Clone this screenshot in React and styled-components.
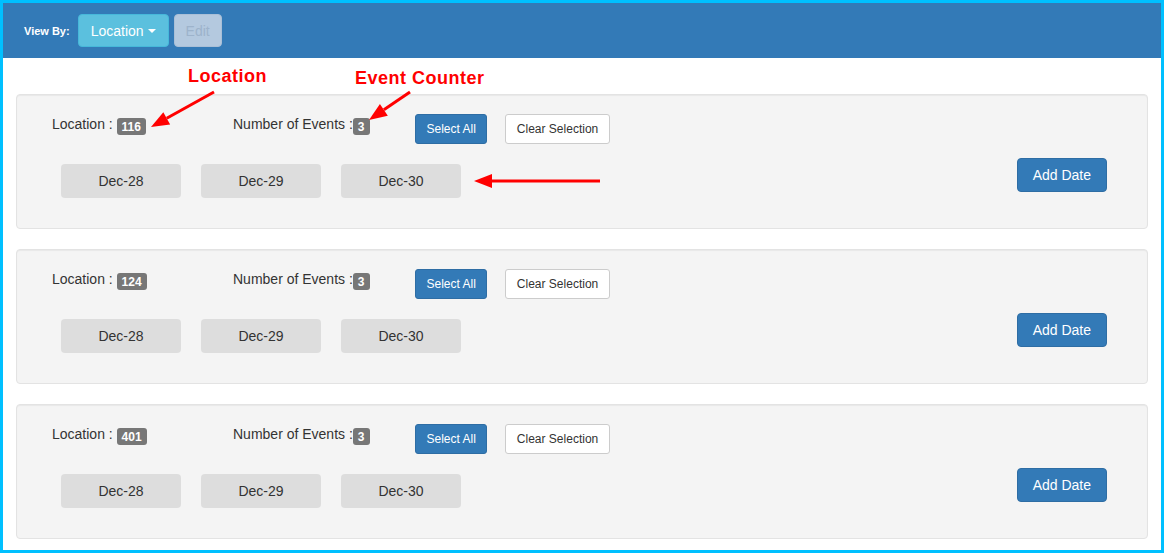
import React from 'react'
import styled, { createGlobalStyle } from 'styled-components';

const GlobalStyle = createGlobalStyle`
    * { box-sizing: border-box; }
    body {
        margin: 0;
        font-family: "Liberation Sans", Arial, sans-serif;
        font-size: 14px;
        color: #333;
        background: #fff;
    }
`;

const Frame = styled.div`
    position: relative;
    width: 1164px;
    height: 553px;
    border: 3px solid #00c0ff;
    overflow: hidden;
`;

const Navbar = styled.div`
    height: 55px;
    background-color: #337ab7;
    display: flex;
    align-items: center;
    padding: 0 21px;
`;

const ViewLabel = styled.span`
    color: #fff;
    font-size: 11px;
    font-weight: bold;
    margin-right: 8px;
`;

const NavButton = styled.button`
    height: 33px;
    padding: 0 ${p => p.$disabled ? 11 : 12}px;
    margin-right: 5px;
    font-family: inherit;
    font-size: 14px;
    border-radius: 4px;
    border: 1px solid ${p => p.$disabled ? '#a9bfd7' : '#46b8da'};
    background-color: ${p => p.$disabled ? '#b4c9df' : '#5bc0de'};
    color: ${p => p.$disabled ? '#9db3cb' : '#fff'};
    display: flex;
    align-items: center;
    gap: 4px;
`;

const Caret = styled.span`
    display: inline-block;
    width: 0;
    height: 0;
    border-top: 4px solid #fff;
    border-left: 4px solid transparent;
    border-right: 4px solid transparent;
    margin-top: 1px;
`;

const Content = styled.div`
    padding: 36px 13px 0 13px;
    display: flex;
    flex-direction: column;
    gap: 20.5px;
`;

const Well = styled.div`
    height: 134.5px;
    background-color: #f4f4f4;
    border: 1px solid #e3e3e3;
    border-radius: 4px;
    box-shadow: inset 0 1px 1px rgba(0,0,0,0.05);
    padding: 19px 39px 0 35px;
`;

const TopRow = styled.div`
    display: flex;
    align-items: flex-start;
    height: 30px;
`;

const InfoGroup = styled.div`
    width: ${p => p.$width}px;
    line-height: 20px;
    white-space: nowrap;
`;

const Badge = styled.span`
    display: inline-block;
    background-color: #777;
    color: #fff;
    font-size: 12px;
    font-weight: bold;
    line-height: 12px;
    padding: 3px 5px 2px;
    border-radius: 3px;
    vertical-align: -2px;
`;

const SmallButton = styled.button`
    height: 30px;
    padding: 0 10.5px;
    font-family: inherit;
    font-size: 12px;
    border-radius: 3px;
    margin-right: 18px;
    border: 1px solid ${p => p.$primary ? '#2e6da4' : '#ccc'};
    background-color: ${p => p.$primary ? '#337ab7' : '#fff'};
    color: ${p => p.$primary ? '#fff' : '#333'};
`;

const BottomRow = styled.div`
    display: flex;
    align-items: flex-start;
    justify-content: space-between;
    margin-top: 14px;
    padding-left: 9px;
`;

const Dates = styled.div`
    display: flex;
    gap: 20px;
    margin-top: 6px;
`;

const DateChip = styled.div`
    width: 120px;
    height: 34px;
    background-color: #ddd;
    border-radius: 4px;
    display: flex;
    align-items: center;
    justify-content: center;
    font-size: 14px;
    color: #333;
`;

const AddButton = styled.button`
    height: 34px;
    padding: 0 15px;
    margin-right: 1px;
    font-family: inherit;
    font-size: 14px;
    border-radius: 4px;
    border: 1px solid #2e6da4;
    background-color: #337ab7;
    color: #fff;
`;

const Note = styled.span`
    position: absolute;
    left: ${p => p.$x}px;
    top: ${p => p.$y}px;
    color: #f00;
    font-size: 18px;
    font-weight: bold;
    letter-spacing: 0.5px;
    line-height: 20px;
`;

const Arrows = styled.svg`
    position: absolute;
    left: -3px;
    top: -3px;
    pointer-events: none;
`;

function Arrow({ x1, y1, x2, y2 }) {
    const angle = Math.atan2(y2 - y1, x2 - x1);
    const len = 18;
    const half = 7;
    const bx = x2 - len * Math.cos(angle);
    const by = y2 - len * Math.sin(angle);
    const px = -Math.sin(angle) * half;
    const py = Math.cos(angle) * half;
    const points = `${x2},${y2} ${bx + px},${by + py} ${bx - px},${by - py}`;
    return (
        <g>
            <line x1={x1} y1={y1} x2={bx} y2={by} stroke="#f00" strokeWidth="3" />
            <polygon points={points} fill="#f00" />
        </g>
    );
}

const locations = ['116', '124', '401'];
const dates = ['Dec-28', 'Dec-29', 'Dec-30'];

export default function App() {
    return (
        <Frame>
            <GlobalStyle />
            <Navbar>
                <ViewLabel>View By:</ViewLabel>
                <NavButton>Location <Caret /></NavButton>
                <NavButton $disabled>Edit</NavButton>
            </Navbar>
            <Content>
                {locations.map(loc => (
                    <Well key={loc}>
                        <TopRow>
                            <InfoGroup $width={181}>Location : <Badge>{loc}</Badge></InfoGroup>
                            <InfoGroup $width={182}>Number of Events :<Badge>3</Badge></InfoGroup>
                            <SmallButton $primary>Select All</SmallButton>
                            <SmallButton>Clear Selection</SmallButton>
                        </TopRow>
                        <BottomRow>
                            <Dates>
                                {dates.map(d => <DateChip key={d}>{d}</DateChip>)}
                            </Dates>
                            <AddButton>Add Date</AddButton>
                        </BottomRow>
                    </Well>
                ))}
            </Content>
            <Note $x={185} $y={63}>Location</Note>
            <Note $x={352} $y={65}>Event Counter</Note>
            <Arrows width="1164" height="553">
                <Arrow x1={214} y1={92} x2={151} y2={127} />
                <Arrow x1={410} y1={92} x2={369} y2={120} />
                <Arrow x1={600} y1={181} x2={474} y2={181} />
            </Arrows>
        </Frame>
    )
}
